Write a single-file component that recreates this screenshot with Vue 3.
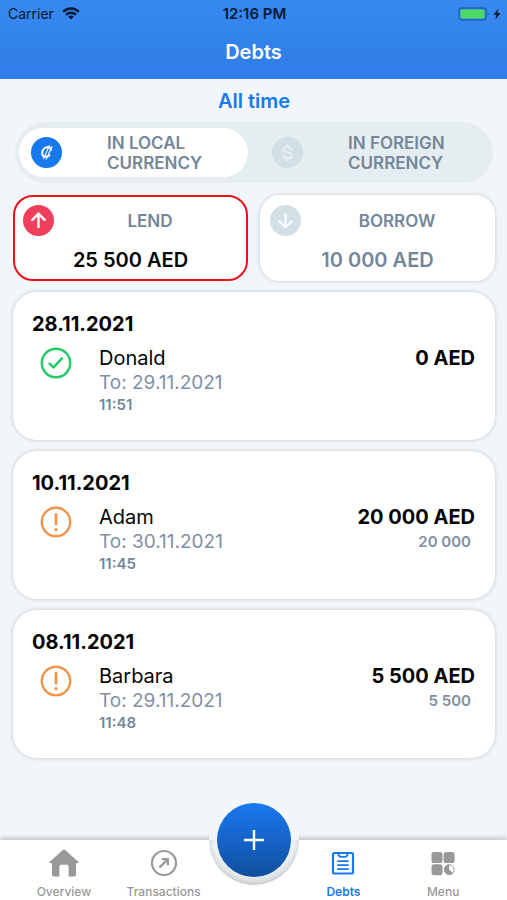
<script setup>
import { ref } from 'vue';

const currency = ref('local');
const direction = ref('lend');
const activeTab = ref('debts');

const currencies = [
  { id: 'local', label: 'IN LOCAL CURRENCY' },
  { id: 'foreign', label: 'IN FOREIGN CURRENCY' }
];

const totals = [
  { id: 'lend', label: 'LEND', amount: '25 500 AED' },
  { id: 'borrow', label: 'BORROW', amount: '10 000 AED' }
];

const debts = [
  { date: '28.11.2021', name: 'Donald', to: '29.11.2021', time: '11:51', amount: '0 AED', rest: '', paid: true },
  { date: '10.11.2021', name: 'Adam', to: '30.11.2021', time: '11:45', amount: '20 000 AED', rest: '20 000', paid: false },
  { date: '08.11.2021', name: 'Barbara', to: '29.11.2021', time: '11:48', amount: '5 500 AED', rest: '5 500', paid: false }
];
</script>

<template>
  <div class="app">
    <header class="header">
      <div class="status-bar">
        <div class="carrier">
          <span>Carrier</span>
          <svg width="18" height="13" viewBox="0 0 18 13" fill="none" stroke="#071a33" stroke-width="2.4">
            <path d="M1.2 4.8a11 11 0 0 1 15.6 0" />
            <path d="M4 7.8a7 7 0 0 1 10 0" />
            <path d="M9 12.6 6.2 9.8a4 4 0 0 1 5.6 0z" fill="#071a33" stroke="none" />
          </svg>
        </div>
        <span class="clock">12:16 PM</span>
        <div class="battery">
          <svg width="32" height="14" viewBox="0 0 32 14">
            <rect x="1" y="1" width="27" height="12" rx="3" fill="none" stroke="#1f5fb0" stroke-width="1.3" />
            <rect x="2.4" y="2.4" width="24.2" height="9.2" rx="1.6" fill="#4cd964" />
            <path d="M29.6 5v4a2.4 2.4 0 0 0 0-4z" fill="#1f5fb0" />
          </svg>
          <svg width="8" height="12" viewBox="0 0 8 12">
            <path d="M5.4.4.4 6.8h3L2.4 11.6l5.2-6.6H4.4z" fill="#071a33" />
          </svg>
        </div>
      </div>
      <h1>Debts</h1>
    </header>

    <main class="content">
      <button type="button" class="period">All time</button>

      <div class="currency-switch">
        <label
          v-for="item in currencies"
          :key="item.id"
          class="currency"
          :class="{ active: currency === item.id }"
        >
          <input v-model="currency" type="radio" name="currency" :value="item.id" />
          <span class="round-icon">
            <svg v-if="item.id === 'local'" width="31" height="31" viewBox="0 0 31 31" fill="none" stroke="#fff" stroke-width="2" stroke-linecap="round">
              <path d="M19.8 13c0-2.4-1.8-3.4-4-2.8-2.8.8-4.6 3.4-4.6 6.2 0 3.6 4 4.6 7.2 1.8" />
              <path d="M18.4 8.6l-5.8 13.2M21 9.6l-5.8 12.6" stroke-width="1.1" />
            </svg>
            <svg v-else width="31" height="31" viewBox="0 0 31 31" fill="none" stroke="#e8eff2" stroke-width="2" stroke-linecap="round">
              <path d="M19.5 12.2c-.5-1.600-2-2.3-4-2.3-2.3 0-4 1-4 2.7 0 4 8.2 1.8 8.2 5.8 0 1.8-1.800 2.8-4.200 2.8-2.3 0-4-.9-4.400-2.600M15.5 7.800v2M15.5 21.2v2" />
            </svg>
          </span>
          <span class="currency-text"><span>{{ item.label }}</span></span>
        </label>
      </div>

      <div class="totals">
        <button
          v-for="item in totals"
          :key="item.id"
          type="button"
          class="total"
          :class="{ active: direction === item.id }"
          @click="direction = item.id"
        >
          <span class="total-head">
            <span class="round-icon">
              <svg width="31" height="31" viewBox="0 0 31 31" fill="none" stroke="#fff" stroke-width="2.4" stroke-linecap="round" stroke-linejoin="round">
                <path v-if="item.id === 'lend'" d="M15.5 22V9M9.300 14.8l6.2-6.2 6.2 6.2" />
                <path v-else d="M15.5 9v13M9.300 16.2l6.2 6.2 6.2-6.2" stroke-width="2" />
              </svg>
            </span>
            <span class="total-label">{{ item.label }}</span>
          </span>
          <span class="total-amount">{{ item.amount }}</span>
        </button>
      </div>

      <article v-for="debt in debts" :key="debt.date" class="debt">
        <h2>{{ debt.date }}</h2>
        <div class="debt-row">
          <svg v-if="debt.paid" width="32" height="32" viewBox="0 0 32 32" fill="none" stroke="#1fcb65" stroke-width="2.4" stroke-linecap="round" stroke-linejoin="round">
            <circle cx="16" cy="16" r="14.2" />
            <path d="M9.5 16.6l4 3.8 8.4-9" />
          </svg>
          <svg v-else width="32" height="32" viewBox="0 0 32 32" fill="none" stroke="#f0954a" stroke-width="2.4" stroke-linecap="round">
            <circle cx="16" cy="16" r="14.2" />
            <path d="M16 8.5v9.5" stroke-width="2.8" />
            <circle cx="16" cy="23.6" r="1.7" fill="#f0954a" stroke="none" />
          </svg>
          <div class="debt-info">
            <span class="name">{{ debt.name }}</span>
            <span class="to">To: {{ debt.to }}</span>
            <span class="time">{{ debt.time }}</span>
          </div>
          <div class="debt-sum">
            <span class="amount">{{ debt.amount }}</span>
            <span v-if="debt.rest" class="rest">{{ debt.rest }}</span>
          </div>
        </div>
      </article>
    </main>

    <nav class="tab-bar">
      <a href="#overview" class="tab" :class="{ active: activeTab === 'overview' }" @click="activeTab = 'overview'">
        <svg width="30" height="30" viewBox="0 0 30 30" fill="currentColor">
          <path d="M13.5 2.2a2.2 2.2 0 0 1 3 0L29 13.4c.8.7.4 1.8-.6 1.8H27v11.4c0 1-.8 1.8-1.8 1.8h-5.600v-9.600c0-1.200-.8-2-2-2h-5.200c-1.200 0-2 .8-2 2v9.600H4.800c-1 0-1.800-.8-1.800-1.800V15.200H1.600c-1 0-1.400-1.100-.6-1.800z" />
        </svg>
        <span>Overview</span>
      </a>
      <a href="#transactions" class="tab" :class="{ active: activeTab === 'transactions' }" @click="activeTab = 'transactions'">
        <svg width="30" height="30" viewBox="0 0 30 30" fill="none" stroke="currentColor" stroke-width="2.2">
          <circle cx="15" cy="15" r="12" />
          <path d="M10.4 19.6l7.400-7.400M12.800 11.200h6v6" />
          <path d="M14.400 10.400h5.200v5.200z" fill="currentColor" stroke="none" />
        </svg>
        <span>Transactions</span>
      </a>
      <div class="add">
        <div class="notch"></div>
        <button type="button" class="add-button" aria-label="Add">
          <svg width="20" height="20" viewBox="0 0 20 20" stroke="#fff" stroke-width="2.4">
            <path d="M10 0v20M0 10h20" />
          </svg>
        </button>
      </div>
      <a href="#debts" class="tab" :class="{ active: activeTab === 'debts' }" @click="activeTab = 'debts'">
        <svg width="30" height="30" viewBox="0 0 30 30" fill="none" stroke="currentColor" stroke-width="2.2" stroke-linecap="round" stroke-linejoin="round">
          <rect x="5" y="5" width="20" height="20.5" rx="1.5" />
          <path d="M10.3 5.2c.2 2.800 1 3.600 2.600 3.600h4.200c1.600 0 2.400-.8 2.600-3.600M10 13.200h10M10 17.200h10M10 21.200h10" stroke-width="1.8" />
        </svg>
        <span>Debts</span>
      </a>
      <a href="#menu" class="tab" :class="{ active: activeTab === 'menu' }" @click="activeTab = 'menu'">
        <svg width="30" height="30" viewBox="0 0 30 30" fill="currentColor">
          <rect x="3.5" y="4" width="11" height="11" rx="2.6" />
          <rect x="15.6" y="4" width="11" height="11" rx="2.6" />
          <rect x="3.5" y="16.2" width="11" height="11" rx="2.6" />
          <circle cx="21.2" cy="21.6" r="4.900" fill="none" stroke="currentColor" stroke-width="1" />
          <path d="M21.2 16.400a5.200 5.200 0 1 0 3.700 8.900l-3.700-3.700z" />
        </svg>
        <span>Menu</span>
      </a>
    </nav>
  </div>
</template>

<style>
body {
  margin: 0;
  background-color: #f0f6fa;
}
</style>

<style scoped>
.app {
  display: flex;
  flex-direction: column;
  min-height: 100vh;
  background-color: #f0f6fa;
  color: #050505;
  font-family: Inter, 'Liberation Sans', sans-serif;
}

button {
  padding: 0;
  border: none;
  background: none;
  color: inherit;
  font-family: inherit;
  cursor: pointer;
}

.header {
  box-sizing: border-box;
  height: 79px;
  background: linear-gradient(#3789f0, #2f7de8);
}

.status-bar {
  display: grid;
  grid-template-columns: 1fr auto 1fr;
  align-items: center;
  height: 27px;
  padding: 0 6px 0 8px;
  color: #071a33;
  font-size: 14px;
}

.carrier,
.battery {
  display: flex;
  align-items: center;
  gap: 8px;
}

.battery {
  justify-content: flex-end;
  gap: 3px;
}

.clock {
  font-size: 15px;
  font-weight: 600;
}

.header h1 {
  margin: 0;
  color: #fff;
  font-size: 20px;
  font-weight: 600;
  line-height: 50px;
  text-align: center;
}

.content {
  display: flex;
  flex: 1;
  flex-direction: column;
  padding: 0 12px 32px 13px;
}

.period {
  align-self: center;
  height: 43px;
  color: #1878ee;
  font-size: 20px;
  font-weight: 600;
}

.currency-switch {
  display: grid;
  grid-template-columns: 1fr 1fr;
  gap: 12px;
  margin: 0 2px 12px;
  padding: 6px 4px;
  border-radius: 31px;
  background-color: #e6edf0;
}

.currency {
  display: flex;
  align-items: center;
  box-sizing: border-box;
  height: 49px;
  padding-left: 12px;
  border-radius: 25px;
  color: #74869a;
  font-size: 17px;
  font-weight: 600;
  line-height: 20px;
  cursor: pointer;
}

.currency input {
  position: absolute;
  opacity: 0;
}

.currency.active {
  background-color: #fff;
}

.currency-text {
  display: flex;
  flex: 1;
  justify-content: center;
  padding-left: 8px;
}

.currency-text span {
  min-width: 100px;
  max-width: 104px;
}

.round-icon {
  display: flex;
  width: 31px;
  height: 31px;
  border-radius: 50%;
  background-color: #d2dfe6;
}

.currency.active .round-icon {
  background-color: #1878ee;
}

.totals {
  display: grid;
  grid-template-columns: 1fr 1fr;
  gap: 12px;
  margin-bottom: 11px;
}

.total {
  display: flex;
  flex-direction: column;
  height: 86px;
  padding: 8px;
  border: 2px solid #fff;
  border-radius: 20px;
  background-color: #fff;
  box-shadow: 0 0 4px rgba(0, 0, 0, 0.2);
  color: #74869a;
}

.total.active {
  border-color: #ea1118;
  box-shadow: none;
}

.total.active .round-icon {
  background-color: #f03e5d;
}

.total-head {
  display: flex;
  align-items: center;
  width: 100%;
}

.total-label {
  flex: 1;
  padding-left: 8px;
  color: #74869a;
  font-size: 17px;
  font-weight: 600;
}

.total-amount {
  width: 100%;
  margin-top: 12px;
  font-size: 20px;
  font-weight: 600;
  line-height: 24px;
}

.total.active .total-amount {
  color: #050505;
}

.debt {
  box-sizing: border-box;
  min-height: 148px;
  margin-bottom: 11px;
  padding: 20px 20px 0 19px;
  border-radius: 24px;
  background-color: #fff;
  box-shadow: 0 0 4px rgba(0, 0, 0, 0.2);
}

.debt h2 {
  margin: 0;
  font-size: 20px;
  font-weight: 700;
  line-height: 24px;
}

.debt-row {
  display: flex;
  align-items: flex-start;
  padding: 10px 0 0 8px;
}

.debt-row > svg {
  margin-top: 1px;
}

.debt-info,
.debt-sum {
  display: flex;
  flex-direction: column;
}

.debt-info {
  margin-left: 27px;
}

.debt-sum {
  align-items: flex-end;
  margin-left: auto;
}

.name {
  font-size: 20px;
  line-height: 24px;
}

.to {
  color: #8090a4;
  font-size: 19px;
  line-height: 26px;
}

.time {
  color: #74869a;
  font-size: 15px;
  font-weight: 600;
  line-height: 18px;
}

.amount {
  font-size: 20px;
  font-weight: 700;
  line-height: 24px;
}

.rest {
  padding-right: 4px;
  color: #8090a4;
  font-size: 15px;
  font-weight: 600;
  line-height: 26px;
}

.tab-bar {
  display: grid;
  grid-template-columns: 1fr 1fr 80px 1fr 1fr;
  height: 60px;
  padding: 0 14px;
  background-color: #fff;
  box-shadow: 0 -2px 5px rgba(0, 0, 0, 0.22);
}

.tab {
  display: flex;
  flex-direction: column;
  align-items: center;
  gap: 4px;
  padding-top: 8px;
  color: #999;
  font-size: 12px;
  font-weight: 500;
  line-height: 20px;
  text-decoration: none;
}

.tab.active {
  color: #1878ee;
  font-weight: 600;
}

.add {
  position: relative;
}

.notch {
  position: absolute;
  top: -45px;
  left: -5px;
  width: 90px;
  height: 90px;
  border-radius: 50%;
  background: linear-gradient(#f0f6fa 50%, #e6e9eb);
}

.notch::after {
  content: '';
  position: absolute;
  top: 45px;
  left: 0;
  width: 90px;
  height: 45px;
  border-radius: 0 0 45px 45px;
  box-shadow: inset 0 -2px 6px rgba(0, 0, 0, 0.16);
}

.add-button {
  position: absolute;
  top: -37px;
  left: 3px;
  display: flex;
  align-items: center;
  justify-content: center;
  width: 74px;
  height: 74px;
  border-radius: 50%;
  background: linear-gradient(#1a78f0, #114f9f);
}
</style>
